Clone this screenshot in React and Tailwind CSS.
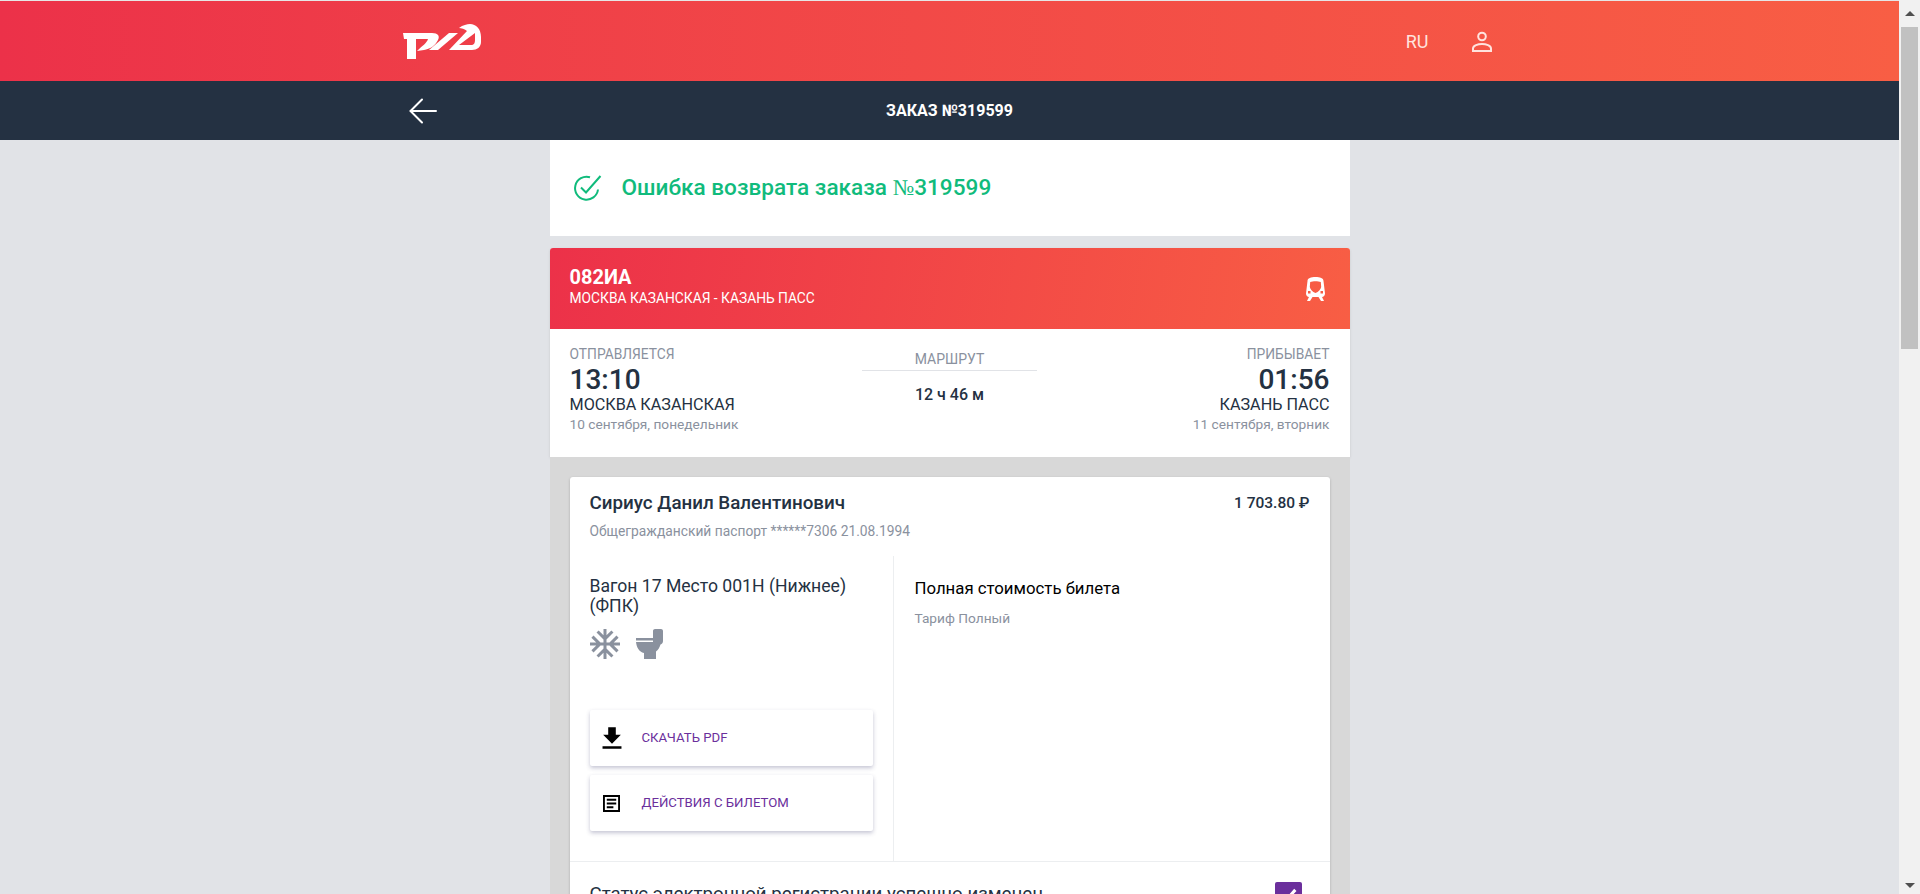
import React from 'react';

const roboto = { fontFamily: 'Roboto, sans-serif' };

function Logo() {
  return (
    <svg width="78" height="35" viewBox="0 0 78 35" fill="#fff">
      <path d="M0 9H29C35 9 37 12 35 16C32 22 27 25 21 26L14 27C19 22 24 19 25 15H13V35H4V15H1Z" />
      <path d="M26 26L46 9H55L35 26Z" />
      <path fillRule="evenodd" d="M46 26L64 7C62 5 58 4 56 4C60 1 64 0 67 0C73 0 78 5 78 13V18C78 23 74 26 69 26ZM56 21H68C71 21 72 19 72 16V9Z" />
    </svg>
  );
}

function Arrow() {
  return (
    <svg width="30" height="28" viewBox="0 0 30 28" fill="none" stroke="#fff" strokeWidth="2" strokeLinecap="round">
      <path d="M28 14H3M14 2.5L2.5 14L14 25.5" />
    </svg>
  );
}

function CheckCircle() {
  return (
    <svg width="30" height="28" viewBox="0 0 30 28" fill="none" stroke="#10bb7c" strokeWidth="2">
      <path d="M25 15.5A11.5 11.5 0 1 1 17 3.2" />
      <path d="M8 13.5L13 18.5L27.5 2" />
    </svg>
  );
}

function UserIcon() {
  return (
    <svg width="22" height="22" viewBox="0 0 22 22" fill="none" stroke="#ffe3de" strokeWidth="2" className="mt-[2px]">
      <circle cx="11" cy="5.5" r="3.8" />
      <path d="M2 20V17.5C2 14.5 7 13 11 13C15 13 20 14.5 20 17.5V20Z" />
    </svg>
  );
}

function TrainIcon() {
  return (
    <svg width="19" height="24" viewBox="0 0 19 24" fill="#fff">
      <path fillRule="evenodd" d="M1.500 4C1.500 1 5 0 9.500 0C14 0 17.500 1 17.500 4L19 16.500C19 18.500 17.500 20 16 20H3C1.500 20 0 18.500 0 16.500ZM4.200 5L3.800 10C4.300 12.500 6.500 14.800 9.500 16C12.500 14.800 14.700 12.500 15.200 10L14.800 5C12 4 7 4 4.200 5ZM2 14V16.500H4.500V14ZM14.500 14V16.500H17V14Z" />
      <path d="M3 20H6.500L4 24H1ZM12.500 20H16L18 24H15Z" />
    </svg>
  );
}

function Snowflake() {
  return (
    <svg width="36" height="36" viewBox="0 0 24 24" fill="#8a919e" className="-m-[3px]">
      <path d="M22 11h-4.170l3.240-3.240-1.410-1.420L15 11h-2V9l4.660-4.660-1.420-1.410L13 6.170V2h-2v4.170L7.760 2.930 6.340 4.340 11 9v2H9L4.340 6.340 2.930 7.760 6.170 11H2v2h4.170l-3.240 3.240 1.410 1.420L9 13h2v2l-4.660 4.660 1.420 1.410L11 17.830V22h2v-4.170l3.240 3.240 1.420-1.410L13 15v-2h2l4.660 4.660 1.410-1.420L17.830 13H22z" />
    </svg>
  );
}

function Toilet() {
  return (
    <svg width="27" height="30" viewBox="0 0 27 30" fill="#8a919e">
      <path d="M17 2C17 .9 17.900 0 19 0H25C26.100 0 27 .9 27 2V12C27 14 26 15 24.500 15.500C23.500 19 22 21 20 22.500V30H8V24C3 23 .5 18 0 13H17Z" />
      <rect x="0" y="9" width="17" height="2.500" />
    </svg>
  );
}

function DownloadIcon() {
  return (
    <svg width="24" height="24" viewBox="3.500 2 17 19" fill="#000">
      <path d="M19 9h-4V3H9v6H5l7 7 7-7zM4.500 18v2h15v-2z" />
    </svg>
  );
}

function DocIcon() {
  return (
    <svg width="17" height="17" viewBox="0 0 18 18" fill="#000">
      <path fillRule="evenodd" d="M0 0H18V18H0ZM2 2V16H16V2Z" />
      <path d="M4 4H14V6H4ZM4 8H14V10H4ZM4 12H11V14H4Z" />
    </svg>
  );
}

function ActionButton({ icon, label, className }) {
  return (
    <div className={`flex h-[56px] w-[283px] items-center rounded-[2px] bg-white pl-[10px] shadow-[0_2px_4px_rgba(60,60,110,0.3)] ${className}`}>
      <div className="flex w-[24px] justify-center">{icon}</div>
      <span className="ml-[18px] text-[13.200px] text-[#6b2f9c]">{label}</span>
    </div>
  );
}

export default function App() {
  return (
    <div className="flex h-[894px] overflow-hidden bg-white" style={roboto}>
      <div className="flex min-w-0 flex-1 flex-col">
        <div className="h-px shrink-0 bg-[#e6e6e6]" />
        <header className="h-[80px] shrink-0 bg-gradient-to-r from-[#ec3149] to-[#f85e44]">
          <div className="mx-auto flex h-full w-[1200px] items-center justify-between pl-[53px] pr-[57px]">
            <Logo />
            <div className="flex items-center gap-[42px] text-[18px] text-[#ffe3de]">
              <span>RU</span>
              <UserIcon />
            </div>
          </div>
        </header>
        <div className="h-[59px] shrink-0 bg-[#243142]">
          <div className="mx-auto grid h-full w-[1200px] grid-cols-[1fr_auto_1fr] items-center">
            <div className="pl-[58px]"><Arrow /></div>
            <div className="text-center text-[16px] font-bold text-white">ЗАКАЗ №319599</div>
          </div>
        </div>

        <main className="flex-1 bg-[#e1e3e7]">
          <div className="mx-auto w-[800px]">
            <div className="flex h-[96px] items-center bg-white pl-[23px]">
              <CheckCircle />
              <h1 className="ml-[19px] text-[22.600px] font-medium text-[#10bb7c]">
                Ошибка возврата заказа <span style={{ fontFamily: '"Liberation Serif", serif' }}>№</span>319599
              </h1>
            </div>

            <section className="mt-[12px] overflow-hidden rounded-t-[3px] bg-white shadow-sm">
              <div className="flex h-[81px] items-center justify-between bg-[linear-gradient(100deg,#ec3149,#f85e44)] pl-[20px] pr-[25px] text-white">
                <div className="pb-[5px]">
                  <div className="text-[20px] font-bold leading-[22px]">082ИА</div>
                  <div className="mt-[2px] text-[13.800px] leading-[16px]">МОСКВА КАЗАНСКАЯ - КАЗАНЬ ПАСС</div>
                </div>
                <TrainIcon />
              </div>
              <div className="flex h-[128px] justify-between px-[20px] pt-[17px]">
                <div className="w-[290px]">
                  <div className="text-[13.800px] leading-[16px] text-[#8a919e]">ОТПРАВЛЯЕТСЯ</div>
                  <div className="mt-[2px] text-[28px] font-medium leading-[31px] text-[#243142]">13:10</div>
                  <div className="text-[16.200px] leading-[20px] text-[#243142]">МОСКВА КАЗАНСКАЯ</div>
                  <div className="mt-[1px] text-[13.700px] leading-[16px] text-[#8a919e]">10 сентября, понедельник</div>
                </div>
                <div className="w-[175px] pt-[5px] text-center">
                  <div className="border-b border-[#e1e3e7] pb-[3px] text-[14px] leading-[16px] text-[#8a919e]">МАРШРУТ</div>
                  <div className="mt-[15px] text-[16px] font-medium leading-[18px] text-[#243142]">12 ч 46 м</div>
                </div>
                <div className="w-[290px] text-right">
                  <div className="text-[13.800px] leading-[16px] text-[#8a919e]">ПРИБЫВАЕТ</div>
                  <div className="mt-[2px] text-[28px] font-medium leading-[31px] text-[#243142]">01:56</div>
                  <div className="text-[16.200px] leading-[20px] text-[#243142]">КАЗАНЬ ПАСС</div>
                  <div className="mt-[1px] text-[13.700px] leading-[16px] text-[#8a919e]">11 сентября, вторник</div>
                </div>
              </div>
            </section>

            <section className="bg-[#d8d8d8] px-[20px] pt-[20px]">
              <div className="rounded-t-[3px] bg-white shadow-[0_1px_3px_rgba(0,0,0,0.2)]">
                <div className="h-[79px] px-[20px] pt-[14px]">
                  <div className="flex items-start justify-between">
                    <div className="text-[18.800px] font-medium leading-[24px] text-[#243142]">Сириус Данил Валентинович</div>
                    <div className="text-[15.500px] font-medium leading-[24px] text-[#243142]">1 703.80 ₽</div>
                  </div>
                  <div className="mt-[8px] text-[13.800px] leading-[16px] text-[#8a919e]">Общегражданский паспорт ******7306 21.08.1994</div>
                </div>
                <div className="flex h-[306px] border-b border-[#eceef0]">
                  <div className="w-[324px] border-r border-[#eceef0] pl-[20px] pt-[20px]">
                    <div className="w-[290px] text-[17.600px] leading-[20px] text-[#243142]">Вагон 17 Место 001Н (Нижнее) (ФПК)</div>
                    <div className="mt-[13px] flex items-center gap-[16px]">
                      <Snowflake />
                      <Toilet />
                    </div>
                    <ActionButton className="mt-[51px]" icon={<DownloadIcon />} label="СКАЧАТЬ PDF" />
                    <ActionButton className="mt-[9px]" icon={<DocIcon />} label="ДЕЙСТВИЯ С БИЛЕТОМ" />
                  </div>
                  <div className="pl-[21px] pt-[22px]">
                    <div className="text-[16.800px] leading-[20px] text-black">Полная стоимость билета</div>
                    <div className="mt-[12px] text-[13.700px] leading-[16px] text-[#8a919e]">Тариф Полный</div>
                  </div>
                </div>
                <div className="flex items-start justify-between pl-[20px] pr-[28px] pt-[20px]">
                  <div className="text-[18.700px] leading-[24px] text-[#243142]">Статус электронной регистрации успешно изменен</div>
                  <div className="flex h-[27px] w-[27px] items-center justify-center rounded-[2px] bg-[#6b2f9c]">
                    <svg width="22" height="22" viewBox="0 0 18 18" fill="none" stroke="#fff" strokeWidth="2.500"><path d="M3 9L7 13L15 4" /></svg>
                  </div>
                </div>
              </div>
            </section>
          </div>
        </main>
      </div>

      {/* scrollbar drawn by hand, the window in the picture has one */}
      <div className="flex w-[21px] shrink-0 flex-col bg-[#f1f1f1]">
        <div className="flex h-[27px] shrink-0 items-center justify-center">
          <div className="h-0 w-0 border-x-[5px] border-b-[5px] border-x-transparent border-b-[#505050]" />
        </div>
        <div className="mx-auto h-[322px] w-[17px] shrink-0 bg-[#c1c1c1]" />
        <div className="flex-1" />
        <div className="flex h-[17px] shrink-0 items-center justify-center">
          <div className="h-0 w-0 border-x-[5px] border-t-[5px] border-x-transparent border-t-[#505050]" />
        </div>
      </div>
    </div>
  );
}
